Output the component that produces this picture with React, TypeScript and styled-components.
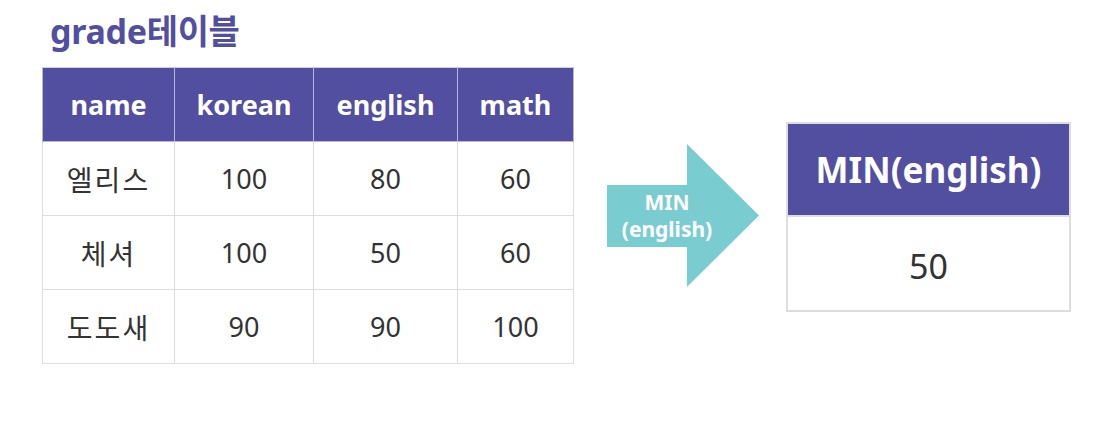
import styled, { createGlobalStyle } from 'styled-components';

const GlobalStyle = createGlobalStyle`
  body {
    margin: 0;
    background: #fff;
    font-family: 'Noto Sans', 'Noto Sans CJK KR', sans-serif;
  }
`;

const PURPLE = '#524ea0';

const grades = [
  { name: '엘리스', korean: 100, english: 80, math: 60 },
  { name: '체셔', korean: 100, english: 50, math: 60 },
  { name: '도도새', korean: 90, english: 90, math: 100 },
];

const columns = [
  { key: 'name', width: 132 },
  { key: 'korean', width: 139 },
  { key: 'english', width: 144 },
  { key: 'math', width: 116 },
] as const;

export default function App() {
  return (
    <Page>
      <GlobalStyle />
      <Title>grade테이블</Title>
      <Row>
        <GradeTable>
          <colgroup>
            {columns.map((c) => (
              <col key={c.key} style={{ width: c.width }} />
            ))}
          </colgroup>
          <thead>
            <tr>
              {columns.map((c) => (
                <HeadCell key={c.key}>{c.key}</HeadCell>
              ))}
            </tr>
          </thead>
          <tbody>
            {grades.map((g) => (
              <tr key={g.name}>
                <Cell $korean>{g.name}</Cell>
                <Cell>{g.korean}</Cell>
                <Cell>{g.english}</Cell>
                <Cell>{g.math}</Cell>
              </tr>
            ))}
          </tbody>
        </GradeTable>

        <Arrow>
          <span>MIN</span>
          <span>(english)</span>
        </Arrow>

        <ResultBox>
          <ResultHead>MIN(english)</ResultHead>
          <ResultValue>50</ResultValue>
        </ResultBox>
      </Row>
    </Page>
  );
}

const Page = styled.div`
  width: 1108px;
  height: 430px;
  padding: 6px 0 0 42px;
  box-sizing: border-box;
`;

const Title = styled.h1`
  margin: 0 0 0 8px;
  font-size: 34px;
  font-weight: 700;
  line-height: 50px;
  color: ${PURPLE};
  letter-spacing: -0.3px;
`;

const Row = styled.div`
  display: flex;
  align-items: center;
  margin-top: 11px;
`;

const GradeTable = styled.table`
  border-collapse: collapse;
  table-layout: fixed;
  width: 531px;
  text-align: center;
`;

const HeadCell = styled.th`
  height: 73px;
  padding: 0;
  background: ${PURPLE};
  color: #fff;
  font-size: 27px;
  font-weight: 700;
  border: 1px solid #b8b6d6;
  border-top-color: #d0d0d0;
`;

const Cell = styled.td<{ $korean?: boolean }>`
  height: 73px;
  padding: 0;
  font-size: ${(p) => (p.$korean ? '28px' : '27px')};
  letter-spacing: ${(p) => (p.$korean ? '2px' : '0')};
  color: #333;
  border: 1px solid #ddd;
`;

const Arrow = styled.div`
  width: 152px;
  height: 143px;
  margin-left: 33px;
  background: #79cdd0;
  clip-path: polygon(0 28.7%, 52.6% 28.7%, 52.6% 0, 100% 50%, 52.6% 100%, 52.6% 72%, 0 72%);
  display: flex;
  flex-direction: column;
  align-items: center;
  justify-content: center;
  padding-right: 32px;
  box-sizing: border-box;
  color: #fff;
  font-size: 21px;
  font-weight: 700;
  line-height: 27px;
`;

const ResultBox = styled.div`
  width: 285px;
  margin-left: 27px;
  margin-top: 3px;
  border: 2px solid #ddd;
  box-sizing: border-box;
`;

const ResultHead = styled.div`
  height: 91px;
  background: ${PURPLE};
  color: #fff;
  font-size: 35px;
  font-weight: 700;
  display: flex;
  align-items: center;
  justify-content: center;
  border-bottom: 2px solid #ddd;
`;

const ResultValue = styled.div`
  height: 93px;
  display: flex;
  align-items: center;
  justify-content: center;
  padding-top: 4px;
  box-sizing: border-box;
  font-size: 34px;
  color: #333;
`;
